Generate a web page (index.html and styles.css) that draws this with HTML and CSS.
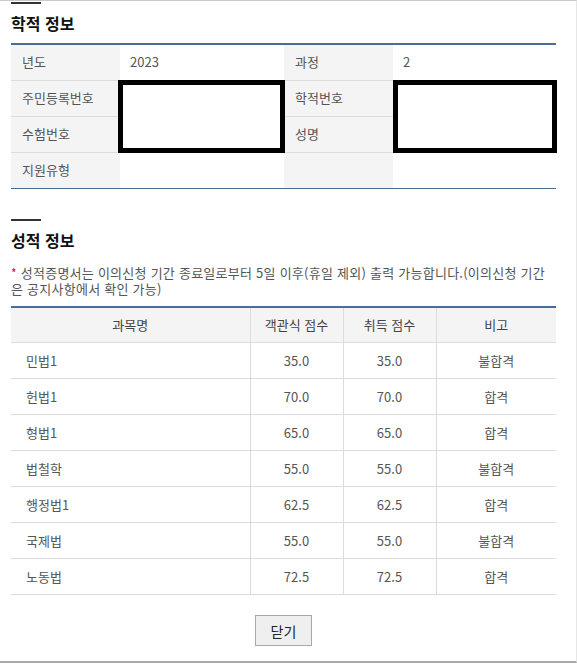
FILE: index.html
```html
<!DOCTYPE html>
<html lang="ko">
<head>
<meta charset="utf-8">
<title>성적 정보</title>
<link rel="stylesheet" href="styles.css">
</head>
<body>
<div class="frame">
  <section class="section">
    <div class="section-bar"></div>
    <h2 class="section-title">학적 정보</h2>
    <table class="info-table">
      <colgroup>
        <col class="c-label"><col class="c-value"><col class="c-label"><col class="c-value2">
      </colgroup>
      <tr>
        <th>년도</th><td>2023</td>
        <th>과정</th><td>2</td>
      </tr>
      <tr>
        <th>주민등록번호</th><td rowspan="2" class="redacted-cell"><div class="redact redact-left"></div></td>
        <th>학적번호</th><td rowspan="2" class="redacted-cell"><div class="redact redact-right"></div></td>
      </tr>
      <tr>
        <th>수험번호</th>
        <th>성명</th>
      </tr>
      <tr class="last">
        <th>지원유형</th><td></td>
        <th></th><td></td>
      </tr>
    </table>
  </section>

  <section class="section section-2">
    <div class="section-bar"></div>
    <h2 class="section-title">성적 정보</h2>
    <p class="note"><span class="star">*</span> 성적증명서는 이의신청 기간 종료일로부터 5일 이후(휴일 제외) 출력 가능합니다.(이의신청 기간<br>은 공지사항에서 확인 가능)</p>
    <table class="score-table">
      <colgroup>
        <col class="s1"><col class="s2"><col class="s3"><col class="s4">
      </colgroup>
      <thead>
        <tr><th>과목명</th><th>객관식 점수</th><th>취득 점수</th><th>비고</th></tr>
      </thead>
      <tbody>
        <tr><td class="subj">민법1</td><td>35.0</td><td>35.0</td><td>불합격</td></tr>
        <tr><td class="subj">헌법1</td><td>70.0</td><td>70.0</td><td>합격</td></tr>
        <tr><td class="subj">형법1</td><td>65.0</td><td>65.0</td><td>합격</td></tr>
        <tr><td class="subj">법철학</td><td>55.0</td><td>55.0</td><td>불합격</td></tr>
        <tr><td class="subj">행정법1</td><td>62.5</td><td>62.5</td><td>합격</td></tr>
        <tr><td class="subj">국제법</td><td>55.0</td><td>55.0</td><td>불합격</td></tr>
        <tr><td class="subj">노동법</td><td>72.5</td><td>72.5</td><td>합격</td></tr>
      </tbody>
    </table>
    <div class="actions">
      <button class="btn-close" type="button">닫기</button>
    </div>
  </section>
</div>
</body>
</html>
```

FILE: styles.css
```css
* { box-sizing: border-box; }

html, body {
  margin: 0;
  padding: 0;
  background: #fff;
}

body {
  font-family: "Noto Sans CJK KR", "Noto Sans", sans-serif;
  font-size: 13px;
  color: #555;
}

.frame {
  width: 577px;
  height: 663px;
  border-top: 1px solid #c8c8c8;
  border-right: 1px solid #e6e6e6;
  border-bottom: 2px solid #a9a9a9;
  padding: 0 20px 0 11px;
}

.section-bar {
  width: 30px;
  height: 2px;
  background: #333;
  margin-top: 1px;
}

.section-title {
  margin: 9px 0 0;
  font-size: 16px;
  line-height: 20px;
  font-weight: 700;
  color: #111;
}

.info-table {
  margin-top: 10px;
  width: 545px;
  border-collapse: collapse;
  table-layout: fixed;
  border-top: 2px solid #4a6d93;
  border-bottom: 1px solid #4a6d93;
}

.info-table .c-label { width: 109px; }
.info-table .c-value { width: 164px; }
.info-table .c-value2 { width: 163px; }

.info-table th,
.info-table td {
  height: 36px;
  border-bottom: 1px solid #dcdcdc;
  text-align: left;
  vertical-align: middle;
  font-weight: 400;
  padding: 0 0 0 11px;
  line-height: 16px;
}

.info-table th {
  background: #f4f4f4;
  color: #555;
}

.info-table td {
  color: #555;
  padding-left: 10px;
}

.info-table tr.last th,
.info-table tr.last td {
  border-bottom: none;
}

.redacted-cell {
  position: relative;
}

.redact {
  position: absolute;
  top: -1px;
  bottom: -1px;
  border: 5px solid #000;
  background: #fff;
}

.redact-left { left: -2px; right: -1px; }
.redact-right { left: 0; right: -1px; }

.section-2 .section-bar {
  margin-top: 30px;
}

.section-2 .section-title {
  margin-top: 9px;
}

.note {
  margin: 15px 0 0;
  line-height: 16px;
  color: #555;
  font-size: 13px;
  letter-spacing: 0.25px;
}

.star {
  color: #c8102e;
  font-size: 12px;
}

.score-table {
  margin-top: 9px;
  width: 545px;
  border-collapse: collapse;
  table-layout: fixed;
  border-top: 2px solid #4a6d93;
}

.score-table .s1 { width: 239px; }
.score-table .s2 { width: 93px; }
.score-table .s3 { width: 93px; }
.score-table .s4 { width: 120px; }

.score-table th,
.score-table td {
  border-bottom: 1px solid #dcdcdc;
  border-left: 1px solid #dcdcdc;
  text-align: center;
  vertical-align: middle;
  line-height: 16px;
  padding: 0;
}

.score-table th:first-child,
.score-table td:first-child {
  border-left: none;
}

.score-table th {
  height: 36px;
  background: #f4f4f4;
  font-weight: 400;
  color: #444;
}

.score-table td {
  height: 36px;
  color: #555;
}

.score-table td.subj {
  text-align: left;
  padding-left: 15px;
}

.actions {
  margin-top: 20px;
  display: flex;
  justify-content: center;
}

.btn-close {
  width: 57px;
  height: 31px;
  padding: 0;
  background: #efefef;
  border: 1px solid #a8a8a8;
  border-radius: 0;
  font-family: "Noto Sans CJK KR", "Noto Sans", sans-serif;
  font-size: 14px;
  color: #222;
  line-height: 16px;
}
```
